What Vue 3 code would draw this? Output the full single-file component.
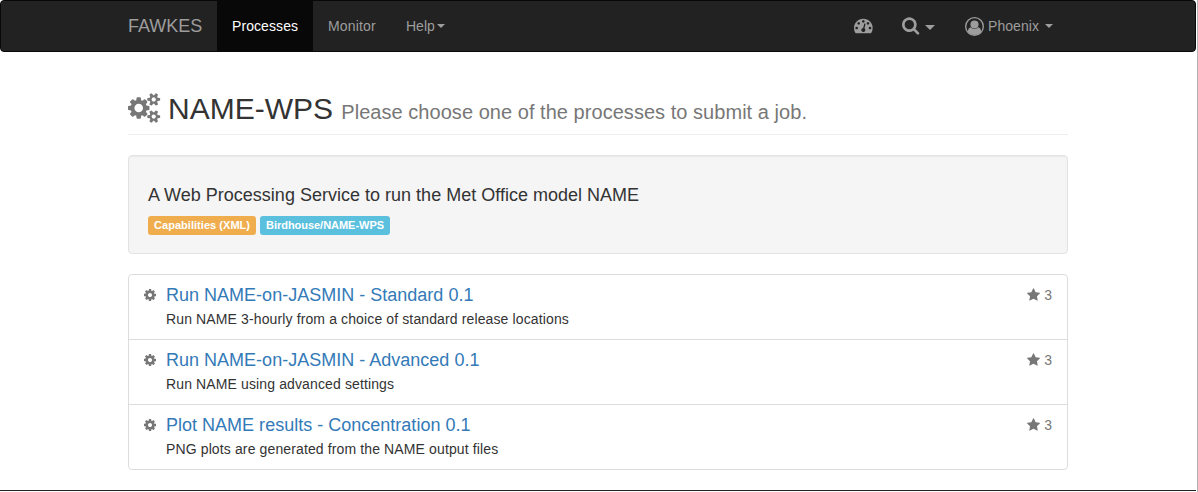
<script setup>
const icons = {
  cog: { w: 1536, d: 'M1024 640q0 106-75 181t-181 75-181-75-75-181 75-181 181-75 181 75 75 181zM1536 749v-222q0-12-8-23t-20-13l-185-28q-19-54-39-91 35-50 107-138 10-12 10-25t-9-23q-27-37-99-108t-94-71q-12 0-26 9l-138 108q-44-23-91-38-16-136-29-186-7-28-36-28h-222q-14 0-24.500 8.500t-11.500 21.500l-28 184q-49 16-90 37l-141-107q-10-9-25-9-14 0-25 11-126 114-165 168-7 10-7 23 0 12 8 23 15 21 51 66.500t54 70.500q-27 50-41 99l-183 27q-13 2-21 12.500t-8 23.500v222q0 12 8 23t19 13l186 28q14 46 39 92-40 57-107 138-10 12-10 24 0 10 9 23 26 36 98.500 107.500t94.500 71.500q13 0 26-10l138-107q44 23 91 38 16 136 29 186 7 28 36 28h222q14 0 24.500-8.500t11.500-21.500l28-184q49-16 90-37l142 107q9 9 24 9 13 0 25-10 129-119 165-170 7-8 7-22 0-12-8-23-15-21-51-66.500t-54-70.500q26-50 41-98l183-28q13-2 21-12.500t8-23.500z' },
  cogs: { w: 1920, d: 'M896 640q0 106 -75 181t-181 75t-181 -75t-75 -181t75 -181t181 -75t181 75t75 181zM1664 128q0 52 -38 90t-90 38t-90 -38t-38 -90q0 -53 37.5 -90.5t90.5 -37.5t90.5 37.5t37.5 90.5zM1664 1152q0 52 -38 90t-90 38t-90 -38t-38 -90q0 -53 37.5 -90.5t90.5 -37.5t90.5 37.5t37.5 90.5zM1280 731v-185q0 -10 -7 -19.5t-16 -10.5l-155 -24q-11 -35 -32 -76q34 -48 90 -115q7 -11 7 -20q0 -12 -7 -19q-23 -30 -82.5 -89.5t-78.5 -59.5q-11 0 -21 7l-115 90q-37 -19 -77 -31q-11 -108 -23 -155q-7 -24 -30 -24h-186q-11 0 -20 7.5t-10 17.5l-23 153q-34 10 -75 31l-118 -89q-7 -7 -20 -7q-11 0 -21 8q-144 133 -144 160q0 9 7 19q10 14 41 53t47 61q-23 44 -35 82l-152 24q-10 1 -17 9.5t-7 19.5v185q0 10 7 19.5t16 10.5l155 24q11 35 32 76q-34 48 -90 115q-7 11 -7 20q0 12 7 20q22 30 82 89t79 59q11 0 21 -7l115 -90q34 18 77 32q11 108 23 154q7 24 30 24h186q11 0 20 -7.5t10 -17.5l23 -153q34 -10 75 -31l118 89q8 7 20 7q11 0 21 -8q144 -133 144 -160q0 -8 -7 -19q-12 -16 -42 -54t-45 -60q23 -48 34 -82l152 -23q10 -2 17 -10.5t7 -19.5zM1920 198v-140q0 -16 -149 -31q-12 -27 -30 -52q51 -113 51 -138q0 -4 -4 -7q-122 -71 -124 -71q-8 0 -46 47t-52 68q-20 -2 -30 -2t-30 2q-14 -21 -52 -68t-46 -47q-2 0 -124 71q-4 3 -4 7q0 25 51 138q-18 25 -30 52q-149 15 -149 31v140q0 16 149 31q13 29 30 52q-51 113 -51 138q0 4 4 7q4 2 35 20t59 34t30 16q8 0 46 -46.5t52 -67.5q20 2 30 2t30 -2q51 71 92 112l6 2q4 0 124 -70q4 -3 4 -7q0 -25 -51 -138q17 -23 30 -52q149 -15 149 -31zM1920 1222v-140q0 -16 -149 -31q-12 -27 -30 -52q51 -113 51 -138q0 -4 -4 -7q-122 -71 -124 -71q-8 0 -46 47t-52 68q-20 -2 -30 -2t-30 2q-14 -21 -52 -68t-46 -47q-2 0 -124 71q-4 3 -4 7q0 25 51 138q-18 25 -30 52q-149 15 -149 31v140q0 16 149 31q13 29 30 52q-51 113 -51 138q0 4 4 7q4 2 35 20t59 34t30 16q8 0 46 -46.5t52 -67.5q20 2 30 2t30 -2q51 71 92 112l6 2q4 0 124 -70q4 -3 4 -7q0 -25 -51 -138q17 -23 30 -52q149 -15 149 -31z' },
  dashboard: { w: 1792, d: 'M384 384q0 53 -37.5 90.5t-90.5 37.5t-90.5 -37.5t-37.5 -90.5t37.5 -90.5t90.5 -37.5t90.5 37.5t37.5 90.5zM576 832q0 53 -37.5 90.5t-90.5 37.5t-90.5 -37.5t-37.5 -90.5t37.5 -90.5t90.5 -37.5t90.5 37.5t37.5 90.5zM1004 351l101 382q6 26 -7.5 48.5t-38.5 29.5t-48 -6.5t-30 -39.5l-101 -382q-60 -5 -107 -43.5t-63 -98.5q-20 -77 20 -146t117 -89t146 20t89 117q16 60 -6 117t-72 91zM1664 384q0 53 -37.5 90.5t-90.5 37.5t-90.5 -37.5t-37.5 -90.5t37.5 -90.5t90.5 -37.5t90.5 37.5t37.5 90.5zM1024 1024q0 53 -37.5 90.5t-90.5 37.5t-90.5 -37.5t-37.5 -90.5t37.5 -90.5t90.5 -37.5t90.5 37.5t37.5 90.5zM1472 832q0 53 -37.5 90.5t-90.5 37.5t-90.5 -37.5t-37.5 -90.5t37.5 -90.5t90.5 -37.5t90.5 37.5t37.5 90.5zM1792 384q0 -261 -141 -483q-19 -29 -54 -29h-1402q-35 0 -54 29q-141 221 -141 483q0 182 71 348t191 286t286 191t348 71t348 -71t286 -191t191 -286t71 -348z' },
  search: { w: 1664, d: 'M1152 704q0 185 -131.5 316.5t-316.5 131.5t-316.5 -131.5t-131.5 -316.5t131.5 -316.5t316.5 -131.5t316.5 131.5t131.5 316.5zM1664 -128q0 -52 -38 -90t-90 -38q-54 0 -90 38l-343 342q-179 -124 -399 -124q-143 0 -273.5 55.5t-225 150t-150 225t-55.5 273.5t55.5 273.5t150 225t225 150t273.5 55.5t273.5 -55.5t225 -150t150 -225t55.5 -273.5q0 -220 -124 -399l343 -343q37 -37 37 -90z' },
  star: { w: 1664, d: 'M1664 889q0 -22 -26 -48l-363 -354l86 -500q1 -7 1 -20q0 -21 -10.5 -35.5t-30.5 -14.5q-19 0 -40 12l-449 236l-449 -236q-22 -12 -40 -12q-21 0 -31.5 14.5t-10.5 35.5q0 6 2 20l86 500l-364 354q-25 27 -25 48q0 37 56 46l502 73l225 455q19 41 49 41t49 -41l225 -455l502 -73q56 -9 56 -46z' },
}

const processes = [
  { title: 'Run NAME-on-JASMIN - Standard 0.1', text: 'Run NAME 3-hourly from a choice of standard release locations', stars: 3 },
  { title: 'Run NAME-on-JASMIN - Advanced 0.1', text: 'Run NAME using advanced settings', stars: 3 },
  { title: 'Plot NAME results - Concentration 0.1', text: 'PNG plots are generated from the NAME output files', stars: 3 },
]
</script>

<template>
  <div class="page">
    <nav class="navbar">
      <div class="bar">
        <a class="brand">FAWKES</a>
        <a class="item active">Processes</a>
        <a class="item monitor">Monitor</a>
        <a class="item">Help<i class="caret"></i></a>
        <div class="right">
          <a class="item dash">
            <svg class="icon dash-icon" :viewBox="`0 0 ${icons.dashboard.w} 1792`"><path transform="matrix(1 0 0 -1 0 1536)" :d="icons.dashboard.d" /></svg>
          </a>
          <a class="item find">
            <svg class="icon search-icon" :viewBox="`0 0 ${icons.search.w} 1792`"><path transform="matrix(1 0 0 -1 0 1536)" :d="icons.search.d" /></svg>
            <i class="caret big"></i>
          </a>
          <a class="item user">
            <svg class="icon user-icon" viewBox="0 0 1792 1792">
              <defs><clipPath id="disc"><circle cx="896" cy="896" r="790" /></clipPath></defs>
              <circle cx="896" cy="896" r="832" fill="none" stroke="currentColor" stroke-width="128" />
              <circle cx="896" cy="704" r="384" />
              <path clip-path="url(#disc)" d="M269 1339q22-155 87.500-257.500t184.500-118.500q67 74 159.500 115.500t195.500 41.500 195.500-41.500 159.500-115.500q119 16 184.500 118.500t87.500 257.500v453h-1254z" />
            </svg>
            <span class="name">Phoenix</span>
            <i class="caret"></i>
          </a>
        </div>
      </div>
    </nav>

    <main class="container">
      <header class="page-header">
        <svg class="icon cogs-icon" :viewBox="`0 0 ${icons.cogs.w} 1792`"><path transform="matrix(1 0 0 -1 0 1536)" :d="icons.cogs.d" /></svg>
        <h2>NAME-WPS <small>Please choose one of the processes to submit a job.</small></h2>
      </header>

      <section class="well">
        <h4>A Web Processing Service to run the Met Office model NAME</h4>
        <div class="labels">
          <a class="label warning">Capabilities (XML)</a>
          <a class="label info">Birdhouse/NAME-WPS</a>
        </div>
      </section>

      <div class="list">
        <div v-for="p in processes" :key="p.title" class="row">
          <svg class="icon cog-icon" :viewBox="`0 0 ${icons.cog.w} 1792`"><path transform="matrix(1 0 0 -1 0 1536)" :d="icons.cog.d" /></svg>
          <div class="body">
            <h4>{{ p.title }}</h4>
            <p>{{ p.text }}</p>
          </div>
          <div class="stars">
            <svg class="icon star-icon" :viewBox="`0 0 ${icons.star.w} 1792`"><path transform="matrix(1 0 0 -1 0 1536)" :d="icons.star.d" /></svg>
            <span>{{ p.stars }}</span>
          </div>
        </div>
      </div>
    </main>
  </div>
</template>

<style>
body {
  margin: 0;
  background: #fff;
}
</style>

<style scoped>
.page {
  box-sizing: border-box;
  width: 1198px;
  height: 492px;
  padding-right: 1px;
  border-right: 1px solid #b3b3b3;
  overflow: hidden;
  display: flex;
  flex-direction: column;
  font-family: "Liberation Sans", Arial, sans-serif;
  font-size: 14px;
  line-height: 20px;
  color: #333;
}
.page::after {
  content: "";
  height: 1px;
  margin-bottom: 1px;
  background: #222;
}
.icon {
  display: block;
  flex: none;
  fill: currentColor;
  overflow: visible;
}
.navbar {
  box-sizing: border-box;
  height: 52px;
  flex: none;
  background: #222;
  border: 1px solid #080808;
  border-radius: 4px;
  color: #9d9d9d;
}
.bar {
  width: 970px;
  height: 50px;
  margin: 0 auto;
  display: flex;
}
.brand {
  width: 74px;
  padding: 15px;
  font-size: 18px;
  white-space: nowrap;
}
.item {
  box-sizing: border-box;
  display: flex;
  align-items: center;
  padding: 0 15px;
  height: 50px;
  white-space: nowrap;
}
.active {
  width: 96px;
  letter-spacing: 0.08px;
  background: #080808;
  color: #fff;
}
.monitor {
  width: 78px;
  letter-spacing: 0.16px;
}
.right {
  display: flex;
  margin-left: auto;
  margin-right: 15px;
}
.caret {
  border-top: 4px solid;
  border-left: 4px solid transparent;
  border-right: 4px solid transparent;
  margin-left: 2px;
}
.caret.big {
  border-top-width: 5px;
  border-left-width: 5px;
  border-right-width: 5px;
  margin-left: 6px;
  margin-top: 2px;
}
.dash {
  padding-right: 14.3px;
}
.dash-icon {
  width: 18.667px;
  height: 18.667px;
  margin-bottom: 1.4px;
}
.user-icon {
  width: 19px;
  height: 19px;
}
.search-icon {
  width: 17.333px;
  height: 18.667px;
  margin-bottom: 1.5px;
}
.name {
  margin-left: 4px;
  margin-right: 4px;
  letter-spacing: 0.06px;
}
.container {
  width: 940px;
  flex: 1;
  margin: 0 auto;
}
.page-header {
  display: flex;
  align-items: flex-start;
  height: 42px;
  margin-top: 40px;
  border-bottom: 1px solid #eee;
}
.cogs-icon {
  width: 32.143px;
  height: 30px;
  margin-top: 1px;
  margin-right: 7.857px;
  color: #777;
}
h2 {
  margin: 0;
  font-size: 30px;
  font-weight: 500;
  line-height: 33px;
  white-space: nowrap;
}
small {
  font-size: 20px;
  font-weight: 400;
  line-height: 1;
  letter-spacing: 0.04px;
  color: #777;
}
h4 {
  margin: 0;
  font-size: 18px;
  font-weight: 500;
  line-height: 21px;
  letter-spacing: 0.01px;
}
.well {
  box-sizing: border-box;
  height: 99px;
  margin-top: 20px;
  padding: 29px 19px 18px;
  background: #f5f5f5;
  border: 1px solid #e3e3e3;
  border-radius: 4px;
  box-shadow: inset 0 1px 1px rgba(0, 0, 0, 0.05);
}
.labels {
  display: flex;
  gap: 4px;
  margin-top: 10px;
}
.label {
  box-sizing: border-box;
  height: 19px;
  padding: 0 6px;
  border-radius: 3px;
  font-size: 11px;
  font-weight: 700;
  line-height: 18px;
  color: #fff;
  white-space: nowrap;
}
.warning {
  width: 108px;
  letter-spacing: 0.04px;
  background: #f0ad4e;
}
.info {
  width: 130px;
  letter-spacing: -0.03px;
  background: #5bc0de;
}
.list {
  margin-top: 20px;
  border: 1px solid #ddd;
  border-radius: 4px;
}
.row {
  display: flex;
  height: 44px;
  padding: 10px 15px;
}
.row + .row {
  border-top: 1px solid #ddd;
}
.cog-icon {
  width: 12px;
  height: 14px;
  margin: 3px 10px 0 0;
  color: #777;
}
.body {
  flex: 1;
}
.body h4 {
  color: #337ab7;
}
.body p {
  margin: 3px 0 0;
  letter-spacing: 0.125px;
}
.stars {
  display: flex;
  align-items: flex-start;
  gap: 4px;
  color: #777;
}
.star-icon {
  width: 13px;
  height: 14px;
  margin-top: 3px;
}
</style>
